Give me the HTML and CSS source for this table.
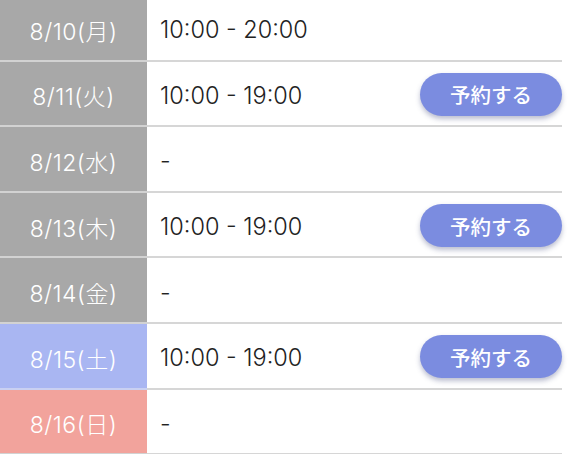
FILE: index.html
```html
<!DOCTYPE html>
<html lang="ja">
<head>
<meta charset="utf-8">
<link rel="stylesheet" href="styles.css">
</head>
<body>
<div class="schedule">
  <div class="row">
    <div class="day">8/10(月)</div>
    <div class="info"><span class="time">10:00 - 20:00</span></div>
  </div>
  <div class="row">
    <div class="day">8/11(火)</div>
    <div class="info"><span class="time">10:00 - 19:00</span><button class="reserve">予約する</button></div>
  </div>
  <div class="row">
    <div class="day">8/12(水)</div>
    <div class="info"><span class="time">-</span></div>
  </div>
  <div class="row">
    <div class="day">8/13(木)</div>
    <div class="info"><span class="time">10:00 - 19:00</span><button class="reserve">予約する</button></div>
  </div>
  <div class="row">
    <div class="day">8/14(金)</div>
    <div class="info"><span class="time">-</span></div>
  </div>
  <div class="row">
    <div class="day sat">8/15(土)</div>
    <div class="info"><span class="time">10:00 - 19:00</span><button class="reserve">予約する</button></div>
  </div>
  <div class="row">
    <div class="day sun">8/16(日)</div>
    <div class="info"><span class="time">-</span></div>
  </div>
</div>
</body>
</html>
```
FILE: styles.css
```css
html, body {
  margin: 0;
  padding: 0;
  background: #fff;
  overflow: hidden;
}
body {
  font-family: Inter, "Noto Sans CJK JP", sans-serif;
}
.schedule {
  margin-top: -4px;
  display: flex;
  flex-direction: column;
}
.row {
  display: flex;
  height: 65.6px;
}
.day {
  width: 147px;
  flex: none;
  background: #a8a8a8;
  color: #fff;
  font-size: 23px;
  font-weight: 300;
  letter-spacing: 0.5px;
  display: flex;
  align-items: center;
  justify-content: center;
  padding-top: 4px;
  border-bottom: 2px solid #d2d2d2;
  box-sizing: border-box;
}
.day.sat { background: #a9b6f2; border-bottom-color: #c9d0f2; }
.day.sun { background: #f2a39c; }
.info {
  width: 415px;
  display: flex;
  align-items: center;
  justify-content: space-between;
  padding-left: 13px;
  border-bottom: 2px solid #d6d6d6;
  box-sizing: border-box;
}
.time {
  font-size: 23.5px;
  font-weight: 300;
  color: #222;
  padding-top: 4px;
}
.reserve {
  width: 142px;
  height: 43px;
  border: none;
  border-radius: 22px;
  background: #7b8ce0;
  color: #fff;
  font-family: "Noto Sans CJK JP", sans-serif;
  font-size: 20.5px;
  font-weight: 500;
  box-shadow: 0 3px 5px rgba(60, 70, 120, 0.35);
  padding: 0;
  margin-top: 2px;
}
```
